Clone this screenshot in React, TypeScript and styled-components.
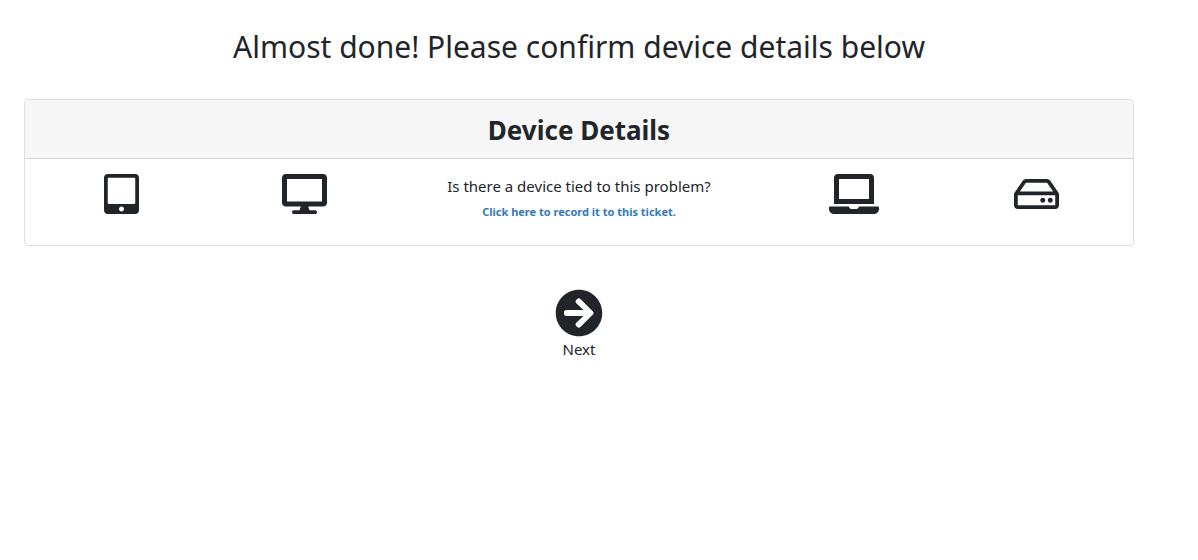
import React from "react";
import styled, { createGlobalStyle } from "styled-components";
import {
  FaArrowCircleRight,
  FaDesktop,
  FaLaptop,
  FaRegHdd,
  FaTabletAlt,
} from "react-icons/fa";

const GlobalStyle = createGlobalStyle`
  *, *::before, *::after { box-sizing: border-box; }
  body {
    margin: 0;
    background: #fff;
    color: #212529;
    font-family: "Segoe UI", "Noto Sans", "Open Sans", sans-serif;
    font-size: 15px;
    line-height: 24px;
  }
`;

const Page = styled.main`
  display: flex;
  flex-direction: column;
  padding: 27px 64px 24px 24px;
`;

const PageTitle = styled.h1`
  margin: 0 0 33px;
  font-size: 30px;
  font-weight: 400;
  line-height: 39px;
  text-align: center;
`;

const Card = styled.section`
  border: 1px solid #dfdfdf;
  border-radius: 4px;
  overflow: hidden;
`;

const CardHeader = styled.header`
  padding: 13px 20px 11px;
  background: #f7f7f7;
  border-bottom: 1px solid #d6d6d6;
`;

const CardTitle = styled.h2`
  margin: 0;
  font-size: 26px;
  font-weight: 700;
  line-height: 34px;
  text-align: center;
`;

const CardBody = styled.div`
  display: grid;
  grid-template-columns: 1fr 1fr 2fr 1fr 1fr;
  padding: 15px 5px 21px;
`;

const DeviceIcon = styled.div<{ $width: number }>`
  display: flex;
  justify-content: center;

  svg {
    display: block;
    width: ${({ $width }) => $width}px;
    height: 40px;
  }
`;

const Prompt = styled.div`
  display: flex;
  flex-direction: column;
  align-items: center;
  gap: 2px;
`;

const Question = styled.p`
  margin: 0;
`;

const RecordLink = styled.a`
  color: #337ab7;
  font-size: 11px;
  font-weight: 700;
  text-decoration: none;
`;

const NextButton = styled.button`
  display: flex;
  flex-direction: column;
  align-items: center;
  align-self: center;
  margin-top: 43px;
  padding: 0;
  border: 0;
  background: none;
  color: inherit;
  font: inherit;
  cursor: pointer;

  svg {
    display: block;
    width: 48px;
    height: 48px;
  }
`;

export default function App() {
  return (
    <>
      <GlobalStyle />
      <Page>
        <PageTitle>Almost done! Please confirm device details below</PageTitle>
        <Card>
          <CardHeader>
            <CardTitle>Device Details</CardTitle>
          </CardHeader>
          <CardBody>
            <DeviceIcon $width={35}><FaTabletAlt /></DeviceIcon>
            <DeviceIcon $width={45}><FaDesktop /></DeviceIcon>
            <Prompt>
              <Question>Is there a device tied to this problem?</Question>
              <RecordLink href="#record">Click here to record it to this ticket.</RecordLink>
            </Prompt>
            <DeviceIcon $width={50}><FaLaptop /></DeviceIcon>
            <DeviceIcon $width={45}><FaRegHdd /></DeviceIcon>
          </CardBody>
        </Card>
        <NextButton type="button">
          <FaArrowCircleRight />
          Next
        </NextButton>
      </Page>
    </>
  );
}
